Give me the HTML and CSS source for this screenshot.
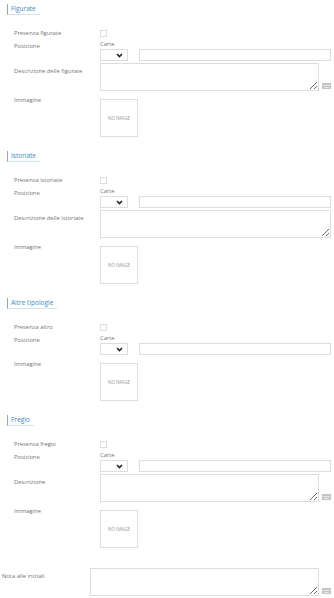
FILE: index.html
```html
<!DOCTYPE html>
<html lang="it">
<head>
    <meta charset="UTF-8">
    <meta name="viewport" content="width=device-width, initial-scale=1.0">
    <title>Iniziali</title>
    <link rel="stylesheet" href="styles.css">
</head>
<body>
    <div class="section">
        <div class="section-title">Figurate</div>
        <div class="row row-check">
            <label>Presenza figurate</label>
            <div class="field"><input type="checkbox"></div>
        </div>
        <div class="row row-pos">
            <label>Posizione</label>
            <div class="field">
                <div class="small-label">Carte</div>
                <div class="pos-inputs">
                    <div class="select"><svg width="7" height="5" viewBox="0 0 7 5"><path d="M1 1 L3.5 3.5 L6 1" fill="none" stroke="#222" stroke-width="1.6"/></svg></div>
                    <input type="text" class="text-input">
                </div>
            </div>
        </div>
        <div class="row row-desc">
            <label>Descrizione delle figurate</label>
            <div class="field field-area">
                <textarea></textarea>
                <svg class="kb-icon" width="9" height="6" viewBox="0 0 9 6"><rect width="9" height="6" fill="#c4c4c4"/><rect x="1" y="2" width="7" height="1" fill="#e8e8e8"/><rect x="2" y="4" width="5" height="1" fill="#e8e8e8"/></svg>
            </div>
        </div>
        <div class="row row-img">
            <label>Immagine</label>
            <div class="field"><div class="no-image">NO IMAGE</div></div>
        </div>
    </div>

    <div class="section">
        <div class="section-title">Istoriate</div>
        <div class="row row-check">
            <label>Presenza istoriate</label>
            <div class="field"><input type="checkbox"></div>
        </div>
        <div class="row row-pos">
            <label>Posizione</label>
            <div class="field">
                <div class="small-label">Carte</div>
                <div class="pos-inputs">
                    <div class="select"><svg width="7" height="5" viewBox="0 0 7 5"><path d="M1 1 L3.5 3.5 L6 1" fill="none" stroke="#222" stroke-width="1.6"/></svg></div>
                    <input type="text" class="text-input">
                </div>
            </div>
        </div>
        <div class="row row-desc">
            <label>Descrizione delle istoriate</label>
            <div class="field field-area">
                <textarea></textarea>
            </div>
        </div>
        <div class="row row-img">
            <label>Immagine</label>
            <div class="field"><div class="no-image">NO IMAGE</div></div>
        </div>
    </div>

    <div class="section">
        <div class="section-title">Altre tipologie</div>
        <div class="row row-check">
            <label>Presenza altro</label>
            <div class="field"><input type="checkbox"></div>
        </div>
        <div class="row row-pos">
            <label>Posizione</label>
            <div class="field">
                <div class="small-label">Carte</div>
                <div class="pos-inputs">
                    <div class="select"><svg width="7" height="5" viewBox="0 0 7 5"><path d="M1 1 L3.5 3.5 L6 1" fill="none" stroke="#222" stroke-width="1.6"/></svg></div>
                    <input type="text" class="text-input">
                </div>
            </div>
        </div>
        <div class="row row-img">
            <label>Immagine</label>
            <div class="field"><div class="no-image">NO IMAGE</div></div>
        </div>
    </div>

    <div class="section">
        <div class="section-title">Fregio</div>
        <div class="row row-check">
            <label>Presenza fregio</label>
            <div class="field"><input type="checkbox"></div>
        </div>
        <div class="row row-pos">
            <label>Posizione</label>
            <div class="field">
                <div class="small-label">Carte</div>
                <div class="pos-inputs">
                    <div class="select"><svg width="7" height="5" viewBox="0 0 7 5"><path d="M1 1 L3.5 3.5 L6 1" fill="none" stroke="#222" stroke-width="1.6"/></svg></div>
                    <input type="text" class="text-input">
                </div>
            </div>
        </div>
        <div class="row row-desc">
            <label>Descrizione</label>
            <div class="field field-area">
                <textarea></textarea>
                <svg class="kb-icon" width="9" height="6" viewBox="0 0 9 6"><rect width="9" height="6" fill="#c4c4c4"/><rect x="1" y="2" width="7" height="1" fill="#e8e8e8"/><rect x="2" y="4" width="5" height="1" fill="#e8e8e8"/></svg>
            </div>
        </div>
        <div class="row row-img">
            <label>Immagine</label>
            <div class="field"><div class="no-image">NO IMAGE</div></div>
        </div>
    </div>

    <div class="row row-nota">
        <label>Nota alle iniziali</label>
        <div class="field field-area">
            <textarea></textarea>
            <svg class="kb-icon" width="9" height="6" viewBox="0 0 9 6"><rect width="9" height="6" fill="#c4c4c4"/><rect x="1" y="2" width="7" height="1" fill="#e8e8e8"/><rect x="2" y="4" width="5" height="1" fill="#e8e8e8"/></svg>
        </div>
    </div>
</body>
</html>
```

FILE: styles.css
```css
body {
    margin: 0;
    padding: 0;
    background: #fff;
    font-family: "Open Sans", sans-serif;
    font-size: 5.8px;
    color: #747474;
}

.section {
    padding-top: 4px;
    margin-bottom: 10px;
}

.section-title {
    width: fit-content;
    margin-left: 7px;
    padding: 0 4px 0 3px;
    height: 10px;
    line-height: 9px;
    font-size: 6.5px;
    color: #3b8ac4;
    border-left: 1px solid #8aa8c4;
    border-bottom: 1px solid #d6e2ec;
}

.row {
    display: grid;
    grid-template-columns: 86px 1fr;
    padding: 0 3px 0 14px;
}

.row label {
    line-height: 8px;
}

.field {
    display: flex;
    flex-direction: column;
}

.row-check {
    margin-top: 14px;
}

.row-check input[type="checkbox"] {
    appearance: none;
    margin: 1px 0 0;
    width: 7px;
    height: 7px;
    border: 1px solid #ddd;
    background: #fff;
}

.row-pos {
    margin-top: 3px;
}

.row-pos label {
    padding-top: 2px;
}

.small-label {
    line-height: 8px;
    margin-bottom: 1px;
}

.pos-inputs {
    display: flex;
    gap: 11px;
}

.select {
    width: 22px;
    height: 10px;
    border: 1px solid #ddd;
    display: flex;
    align-items: center;
    justify-content: flex-end;
    padding-right: 4px;
    box-sizing: content-box;
}

.select svg {
    display: block;
}

.text-input {
    flex: 1;
    height: 12px;
    box-sizing: border-box;
    border: 1px solid #ddd;
    padding: 0;
    margin: 0;
    min-width: 0;
}

.row-desc {
    margin-top: 2px;
}

.row-desc label {
    padding-top: 4px;
}

.field-area {
    flex-direction: row;
    align-items: flex-end;
}

.field-area textarea {
    flex: 1;
    height: 28px;
    box-sizing: border-box;
    border: 1px solid #ddd;
    padding: 0;
    margin: 0;
    min-width: 0;
    resize: both;
}

.kb-icon {
    display: block;
    margin: 0 0 2px 3px;
    flex-shrink: 0;
}

.row-img {
    margin-top: 8px;
}

.row-img label {
    margin-top: -3px;
}

.no-image {
    width: 36px;
    height: 36px;
    border: 1px solid #ddd;
    display: flex;
    align-items: center;
    justify-content: center;
    font-size: 4.5px;
    color: #999;
}

.row-nota {
    grid-template-columns: 88px 1fr;
    padding-left: 2px;
    margin-top: 20px;
}

.row-nota label {
    padding-top: 4px;
}
```
